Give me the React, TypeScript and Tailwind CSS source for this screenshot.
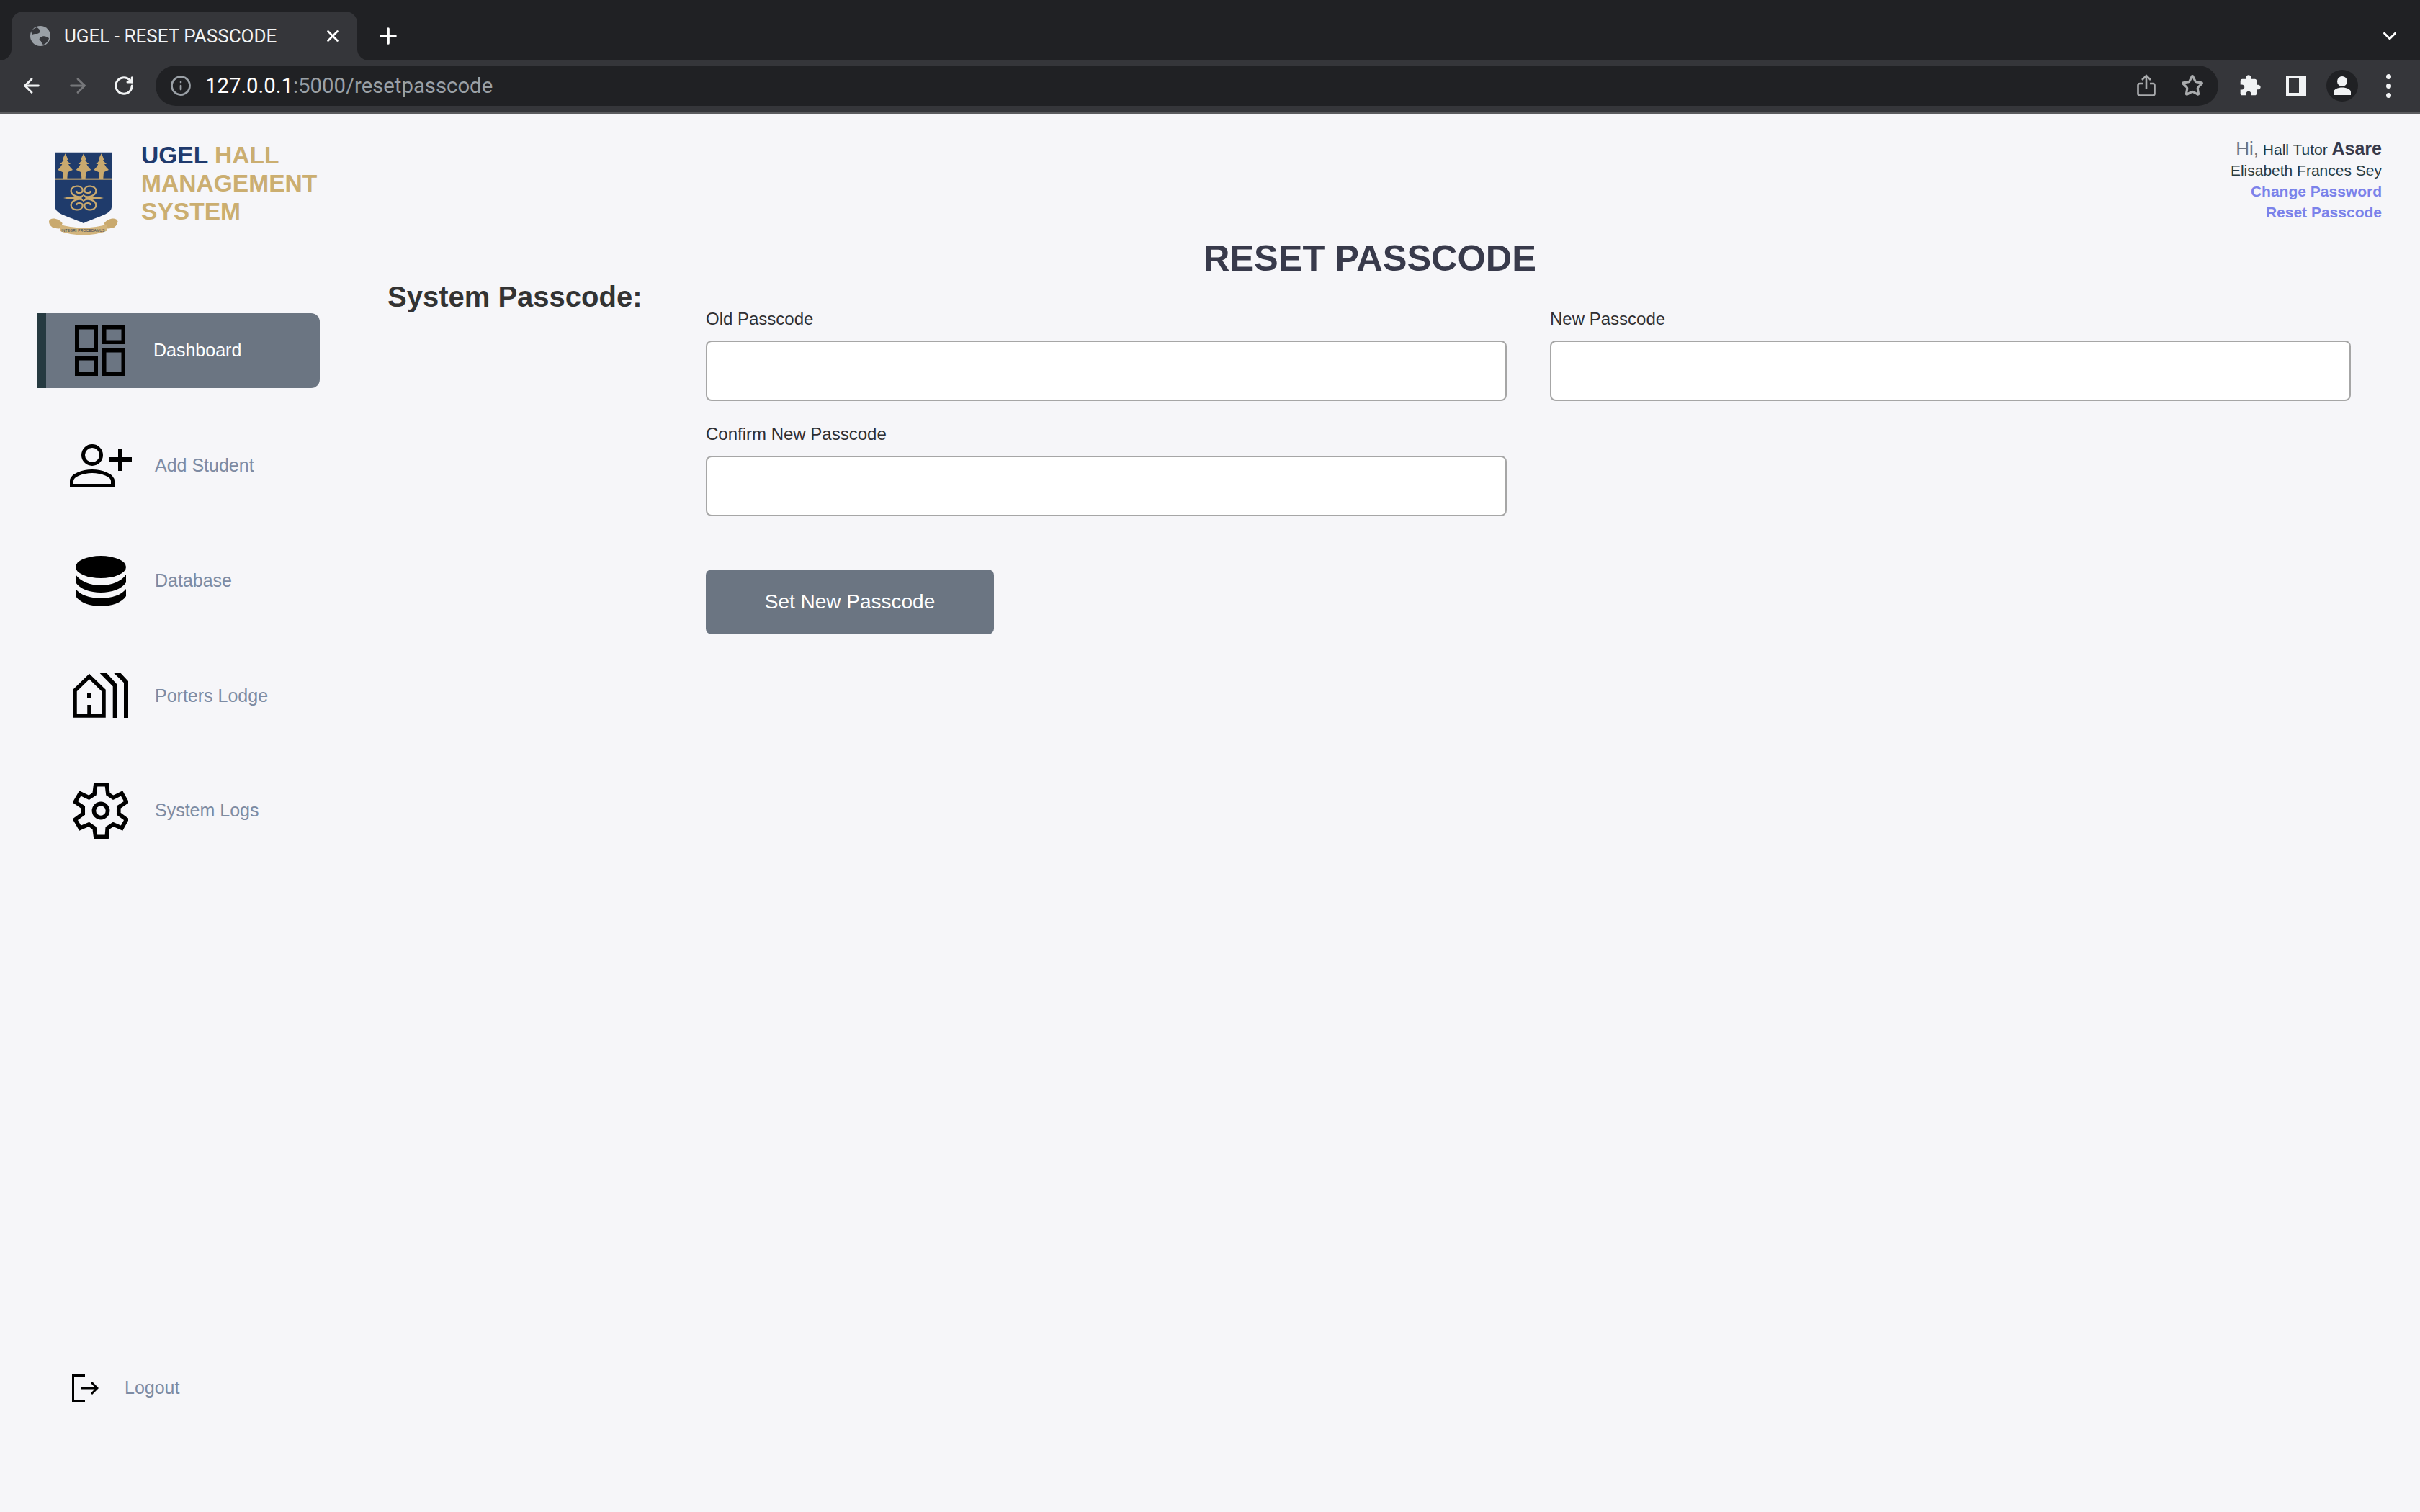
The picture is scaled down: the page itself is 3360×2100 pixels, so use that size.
import { Star, X, Plus, ChevronDown, ArrowLeft, ArrowRight, RotateCw, Info } from 'lucide-react'

function Crest() {
  const tree = 'M0 40 C5 50 9 58 11 66 L7 66 C11 74 18 80 22 84 L13 84 C17 94 25 102 31 108 L10 118 L8 145 H-8 L-10 118 L-31 108 C-25 102 -17 94 -13 84 L-22 84 C-18 80 -11 74 -7 66 L-11 66 C-9 58 -5 50 0 40 Z'
  const swirl = 'M166 216 C150 226 116 216 116 195 C116 172 162 168 164 192 C165 206 140 208 138 195'
  return (
    <svg width="120" height="130" viewBox="0 0 360 390" className="shrink-0 mt-1">
      <path d="M50 35 H285 V262 C285 292 235 300 168 330 C100 300 50 292 50 262 Z" fill="#1f3b6b" />
      {[92, 168, 242].map(x => (
        <path key={x} d={tree} transform={`translate(${x} 0)`} fill="#c9a96e" />
      ))}
      <rect x="50" y="143" width="235" height="6" fill="#c9a96e" />
      <g fill="none" stroke="#c9a96e" strokeWidth="7">
        <path d={swirl} />
        <path d={swirl} transform="translate(336 0) scale(-1 1)" />
        <path d={swirl} transform="translate(0 450) scale(1 -1)" />
        <path d={swirl} transform="translate(336 450) scale(-1 -1)" />
      </g>
      <path d="M84 225 L112 219 H224 L252 225 L224 231 H112 Z" fill="#c9a96e" />
      <path d="M168 211 L179 225 L168 239 L157 225 Z" fill="#1f3b6b" stroke="#c9a96e" strokeWidth="4" />
      <path d="M24 322 C28 304 64 308 80 330 L72 352 C50 354 24 348 24 322 Z" fill="#c9a96e" />
      <path d="M310 322 C306 304 270 308 254 330 L262 352 C284 354 310 348 310 322 Z" fill="#c9a96e" />
      <path d="M68 334 C120 354 212 354 266 334 L264 362 C212 384 120 384 70 362 Z" fill="#d2b47c" />
      <text x="166" y="367" textAnchor="middle" fontSize="15" textLength="180" fill="#3a4252" fontFamily="Liberation Sans">INTEGRI PROCEDAMUS</text>
    </svg>
  )
}

function DashboardIcon() {
  return (
    <svg width="70" height="70" viewBox="0 0 70 70" fill="none" stroke="#000" strokeWidth="5.5">
      <rect x="2.75" y="2.75" width="26.5" height="31.5" />
      <rect x="40.75" y="2.75" width="26.5" height="20.5" />
      <rect x="40.75" y="34.75" width="26.5" height="32.5" />
      <rect x="2.75" y="45.75" width="26.5" height="21.5" />
    </svg>
  )
}

function AddStudentIcon() {
  return (
    <svg width="86" height="60" viewBox="0 0 86 60" fill="none" stroke="#000" strokeWidth="5" className="ml-[2px]">
      <circle cx="31" cy="15" r="12.5" />
      <path d="M2.5 57.5 V51 C2.5 43 18 37.5 31 37.5 S59.5 43 59.5 51 V57.5 Z" />
      <path d="M54 21 H86 M70 6 V37" strokeWidth="6" />
    </svg>
  )
}

function DatabaseIcon() {
  return (
    <svg width="70" height="70" viewBox="0 0 70 70" fill="#000" className="ml-[1px]">
      <ellipse cx="35" cy="15.5" rx="35" ry="15.5" />
      <path d="M0 26 C6 35 20 41 35 41 S64 35 70 26 V37 C64 46 50 51 35 51 S6 46 0 37 Z" />
      <path d="M0 46 C6 54 20 59 35 59 S64 54 70 46 V56 C64 65 50 70 35 70 S6 65 0 56 Z" />
    </svg>
  )
}

function LodgeIcon() {
  return (
    <svg width="77" height="62" viewBox="0 0 77 62" fill="#000">
      <path d="M3 59 V24 L23 4.5 L43 24 V59 Z M23 44 V59" fill="none" stroke="#000" strokeWidth="5.5" />
      <rect x="20" y="28" width="5.5" height="6" />
      <path d="M37.7 0 H47.3 L61.7 15.7 V62 H55.7 V18.3 Z" />
      <path d="M57.3 0 H66.7 L77 11 V62 H71 V13.3 Z" />
    </svg>
  )
}

function GearIcon() {
  return (
    <svg width="76" height="78" viewBox="65 48 230 234" fill="none" stroke="#000" strokeWidth="17" className="ml-[1px]">
      <path d="M158 55 H205 L210 95 L232 110 L268 92 L288 128 L255 150 V178 L288 202 L268 238 L232 222 L208 238 L205 275 H158 L153 238 L130 222 L93 238 L72 202 L105 178 V150 L72 128 L93 92 L130 110 L153 95 Z" />
      <circle cx="180" cy="165" r="29" />
    </svg>
  )
}

const navItems = [
  { label: 'Dashboard', icon: <DashboardIcon />, active: true },
  { label: 'Add Student', icon: <AddStudentIcon />, active: false },
  { label: 'Database', icon: <DatabaseIcon />, active: false },
  { label: 'Porters Lodge', icon: <LodgeIcon />, active: false },
  { label: 'System Logs', icon: <GearIcon />, active: false },
]

function BrowserChrome() {
  return (
    <div className="shrink-0 font-['Roboto',sans-serif]">
      {/* Tab strip */}
      <div className="flex h-[84px] bg-[#35363a]">
        <div className="w-4 bg-[#202124] rounded-br-2xl" />
        <div className="w-[480px] bg-[#202124] pt-4">
          <div className="h-[68px] bg-[#35363a] rounded-t-2xl flex items-center pl-[26px] pr-[21px]">
            <svg width="28" height="28" viewBox="0 0 28 28" className="shrink-0">
              <circle cx="14" cy="14" r="14" fill="#9aa0a6" />
              <path d="M9 2 C14 5 15 8 12 10 C9 12 6 10 3 12 L1 8 C3 5 6 3 9 2 Z M14 16 C18 13 22 14 26 17 C25 21 22 25 18 26 C15 24 16 21 13 20 C12 18 13 17 14 16 Z" fill="#35363a" />
            </svg>
            <span className="ml-[19px] text-[26px] text-[#f1f3f4] whitespace-nowrap">UGEL - RESET PASSCODE</span>
            <X size={26} strokeWidth={2.5} className="ml-auto text-white" />
          </div>
        </div>
        <div className="flex-1 bg-[#202124] rounded-bl-2xl flex items-center pt-4 pl-[26px] pr-[27px]">
          <Plus size={34} strokeWidth={2.6} className="text-white" />
          <ChevronDown size={30} strokeWidth={2.4} className="ml-auto text-white" />
        </div>
      </div>

      {/* Toolbar */}
      <div className="flex items-center h-[74px] pb-[2px] px-3 bg-[#35363a] border-b-2 border-[#5b5c5f]">
        <div className="w-16 flex justify-center"><ArrowLeft size={32} strokeWidth={2.2} className="text-[#f1f3f4]" /></div>
        <div className="w-16 flex justify-center"><ArrowRight size={32} strokeWidth={2.2} className="text-[#77787b]" /></div>
        <div className="w-16 flex justify-center"><RotateCw size={30} strokeWidth={2.4} className="text-[#f1f3f4]" /></div>
        <div className="flex-1 ml-3 h-14 rounded-full bg-[#202124] flex items-center pl-[20px] pr-1">
          <Info size={30} strokeWidth={2.2} className="text-[#9aa0a6]" />
          <span className="ml-[19px] pt-[2px] text-[29.3px] text-white">127.0.0.1<span className="text-[#9aa0a6]">:5000/resetpasscode</span></span>
          <div className="ml-auto w-16 flex justify-center">
            <svg width="26" height="32" viewBox="0 0 26 32" fill="none" stroke="#a9abad" strokeWidth="2.6">
              <path d="M8 13 H4 C2.5 13 1.5 14 1.5 15.5 V27 C1.5 28.5 2.5 29.5 4 29.5 H22 C23.5 29.5 24.5 28.5 24.5 27 V15.5 C24.5 14 23.5 13 22 13 H18" />
              <path d="M13 21 V2.5 M7 8 L13 2 L19 8" />
            </svg>
          </div>
          <div className="w-16 flex justify-center"><Star size={32} strokeWidth={2.4} className="text-[#a9abad]" /></div>
        </div>
        <div className="ml-3 w-16 flex justify-center">
          <svg width="32" height="32" viewBox="0 0 24 24" fill="#f1f3f4">
            <path d="M20.5 11H19V7c0-1.1-.9-2-2-2h-4V3.5C13 2.12 11.88 1 10.5 1S8 2.12 8 3.5V5H4c-1.1 0-1.99.9-1.99 2v3.8H3.5c1.49 0 2.7 1.21 2.7 2.7s-1.21 2.7-2.7 2.7H2V20c0 1.1.9 2 2 2h3.8v-1.5c0-1.49 1.21-2.7 2.7-2.7 1.49 0 2.7 1.21 2.7 2.7V22H17c1.1 0 2-.9 2-2v-4h1.5c1.38 0 2.5-1.12 2.5-2.5S21.88 11 20.5 11z" />
          </svg>
        </div>
        <div className="w-16 flex justify-center">
          <svg width="28" height="28" viewBox="0 0 28 28">
            <rect width="28" height="28" fill="#f1f3f4" />
            <rect x="4" y="4" width="14" height="20" fill="#35363a" />
          </svg>
        </div>
        <div className="w-16 flex justify-center">
          <div className="w-11 h-11 rounded-full bg-[#202124] flex items-center justify-center">
            <svg width="26" height="28" viewBox="0 0 26 28" fill="#f1f3f4">
              <circle cx="13" cy="8" r="7" />
              <path d="M1 27 V23 C1 19 7 16.5 13 16.5 S25 19 25 23 V27 Z" />
            </svg>
          </div>
        </div>
        <div className="w-16 flex flex-col items-center gap-[6px]">
          <span className="w-[7px] h-[7px] rounded-full bg-[#f1f3f4]" />
          <span className="w-[7px] h-[7px] rounded-full bg-[#f1f3f4]" />
          <span className="w-[7px] h-[7px] rounded-full bg-[#f1f3f4]" />
        </div>
      </div>
    </div>
  )
}

function Sidebar() {
  return (
    <aside className="w-[444px] shrink-0 flex flex-col">
      <div className="flex items-start gap-[16px] pl-[60px] pt-[38px]">
        <Crest />
        <div className="text-[33.6px] leading-[39px] font-bold text-[#cbae70]">
          <span className="text-[#203a6d]">UGEL</span> HALL<br />MANAGEMENT<br />SYSTEM
        </div>
      </div>

      <nav className="mt-[105px] pl-[52px] flex flex-col gap-[55.75px]">
        {navItems.map(item => (
          <a
            key={item.label}
            className={`flex items-center h-[104px] pl-[27px] border-l-12 rounded-r-xl ${item.active ? 'bg-[#6b7582] border-[#263a41] text-white' : 'border-transparent text-[#7d8ba3]'}`}
          >
            <span className="w-[96px] flex justify-center shrink-0">{item.icon}</span>
            <span className={`text-[25px] ${item.active ? 'ml-[26px]' : 'ml-[28px]'}`}>{item.label}</span>
          </a>
        ))}
      </nav>

      <a className="mt-auto mb-[152px] ml-[100px] h-10 flex items-center text-[25px] text-[#7d8ba3]">
        <svg width="37" height="38" viewBox="0 0 37 38" fill="none" stroke="#000" strokeWidth="3">
          <path d="M18 1.5 H1.5 V36.5 H18" />
          <path d="M13 19 H35 M27 11 L35 19 L27 27" />
        </svg>
        <span className="ml-[36px]">Logout</span>
      </a>
    </aside>
  )
}

function Field({ label }: { label: string }) {
  return (
    <label className="flex flex-col gap-[15px]">
      <span className="h-[30px] leading-[30px] text-[24px] text-[#2f2f33]">{label}</span>
      <input className="h-[84px] bg-white border-2 border-[#a6a6a6] rounded-lg" />
    </label>
  )
}

export default function App() {
  return (
    <div className="w-[3360px] h-[2100px] flex flex-col bg-[#f6f6f9] font-['Liberation_Sans',Arial,sans-serif]">
      <BrowserChrome />
      <div className="flex-1 flex">
        <Sidebar />
        <main className="flex-1 flex flex-col">
          <div className="pt-[34px] pr-[53px] text-right text-[21px] leading-[29px] text-[#263a41]">
            <div>
              <span className="text-[26px] text-[#6b7280]">Hi,</span> Hall Tutor{' '}
              <span className="text-[25px] font-bold text-[#383a4b]">Asare</span>
            </div>
            <div>Elisabeth Frances Sey</div>
            <div className="font-bold text-[#7b82ea]">Change Password</div>
            <div className="font-bold text-[#7b82ea]">Reset Passcode</div>
          </div>

          <h1 className="mt-5 h-[60px] leading-[60px] text-center text-[50.5px] font-bold text-[#383a4b]">RESET PASSCODE</h1>

          <div className="flex pl-[94px] pr-[96px]">
            <h2 className="w-[442px] shrink-0 h-[46px] leading-[46px] text-[40px] font-bold text-[#333333]">System Passcode:</h2>
            <form className="flex-1 pt-[39px]">
              <div className="grid grid-cols-2 gap-x-[60px] gap-y-[31px]">
                <Field label="Old Passcode" />
                <Field label="New Passcode" />
                <Field label="Confirm New Passcode" />
              </div>
              <button type="button" className="mt-[74px] w-[400px] h-[90px] rounded-lg bg-[#6b7582] text-white text-[28px]">Set New Passcode</button>
            </form>
          </div>
        </main>
      </div>
    </div>
  )
}
